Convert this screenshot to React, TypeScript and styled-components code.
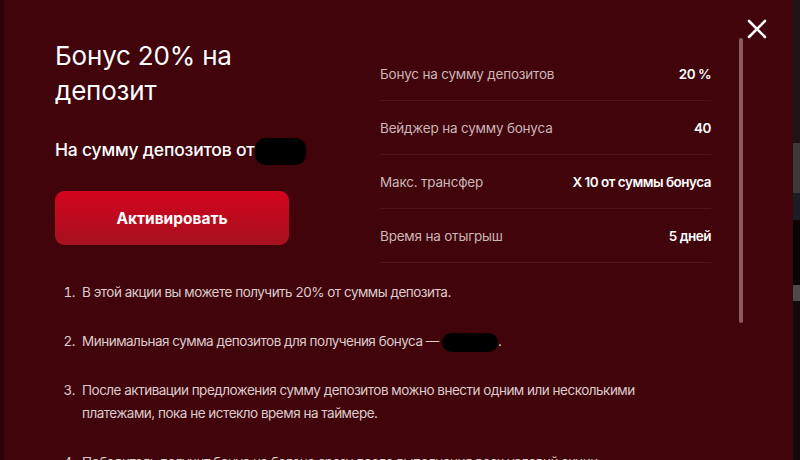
import React from "react";
import styled, { createGlobalStyle } from "styled-components";

const Global = createGlobalStyle`
  html, body { margin: 0; padding: 0; background: #140708; }
  body { font-family: Inter, "Noto Sans", "Liberation Sans", sans-serif; }
  * { box-sizing: border-box; }
`;

const Screen = styled.div`
  display: flex;
  width: 800px;
  height: 460px;
  overflow: hidden;
  background: #2c0206;
`;

const EdgeLeft = styled.div`
  width: 4px;
  flex: none;
  background: #2c0206;
`;

const Modal = styled.div`
  position: relative;
  width: 789px;
  flex: none;
  height: 460px;
  background: #41040b;
  padding: 38px 82px 0 51px;
  color: #fff;
  overflow: hidden;
`;

const EdgeRight = styled.div`
  flex: 1;
  display: flex;
  flex-direction: column;
`;

const Patch = styled.div<{ $h: number; $c: string }>`
  height: ${(p) => p.$h}px;
  background: ${(p) => p.$c};
  flex: none;
`;

const Top = styled.div`
  display: grid;
  grid-template-columns: 1fr 331px;
  column-gap: 50px;
`;

const LeftCol = styled.div`
  display: flex;
  flex-direction: column;
`;

const Title = styled.h1`
  margin: 0;
  font-size: 26px;
  line-height: 35px;
  font-weight: 400;
  letter-spacing: -0.2px;
`;

const Sub = styled.p`
  margin: 30px 0 0;
  font-size: 17.5px;
  line-height: 24px;
  font-weight: 500;
  white-space: nowrap;
  letter-spacing: -0.2px;
`;

const Hidden = styled.span<{ $w: number; $h: number }>`
  display: inline-block;
  width: ${(p) => p.$w}px;
  height: ${(p) => p.$h}px;
  background: #000;
  border-radius: 10px;
  vertical-align: middle;
`;

const ActivateButton = styled.button`
  margin-top: 26px;
  width: 234px;
  height: 54px;
  border: none;
  border-radius: 9px;
  background: linear-gradient(180deg, #d3031d 0%, #a6121f 100%);
  color: #fff;
  font-family: inherit;
  font-size: 15.5px;
  font-weight: 700;
  cursor: pointer;
`;

const Table = styled.div`
  margin-top: 9px;
  display: flex;
  flex-direction: column;
`;

const Row = styled.div`
  height: 54px;
  display: flex;
  align-items: center;
  justify-content: space-between;
  border-bottom: 1px solid rgba(255, 255, 255, 0.07);
  font-size: 13.5px;
`;

const Label = styled.span`
  color: #cbb6b8;
  letter-spacing: -0.2px;
`;

const Value = styled.span`
  color: #fff;
  font-weight: 600;
  letter-spacing: -0.5px;
`;

const List = styled.ol`
  margin: 18px 0 0;
  padding: 0 0 0 23px;
  max-width: 630px;
  font-size: 13.5px;
  line-height: 23px;
  color: #dccbcc;
  letter-spacing: -0.5px;
`;

const Item = styled.li`
  margin-bottom: 26px;
  padding-left: 4px;
`;

const Scrollbar = styled.div`
  position: absolute;
  top: 38px;
  right: 50px;
  width: 4px;
  height: 285px;
  border-radius: 2px;
  background: #8d5a5f;
`;

const Close = styled.button`
  position: absolute;
  top: 18px;
  right: 25px;
  width: 22px;
  height: 22px;
  padding: 0;
  border: none;
  background: transparent;
  cursor: pointer;
  display: flex;
  align-items: center;
  justify-content: center;
`;

const rows = [
  ["Бонус на сумму депозитов", "20 %"],
  ["Вейджер на сумму бонуса", "40"],
  ["Макс. трансфер", "X 10 от суммы бонуса"],
  ["Время на отыгрыш", "5 дней"],
];

export default function App() {
  return (
    <>
      <Global />
      <Screen>
        <EdgeLeft />
        <Modal>
          <Top>
            <LeftCol>
              <Title>
                Бонус 20% на
                <br />
                депозит
              </Title>
              <Sub>
                На сумму депозитов от
                <Hidden $w={51} $h={27} />
              </Sub>
              <ActivateButton>Активировать</ActivateButton>
            </LeftCol>
            <Table>
              {rows.map(([l, v]) => (
                <Row key={l}>
                  <Label>{l}</Label>
                  <Value>{v}</Value>
                </Row>
              ))}
            </Table>
          </Top>
          <List>
            <Item>В этой акции вы можете получить 20% от суммы депозита.</Item>
            <Item>
              Минимальная сумма депозитов для получения бонуса —{" "}
              <Hidden $w={56} $h={19} />.
            </Item>
            <Item>
              После активации предложения сумму депозитов можно внести одним или несколькими
              платежами, пока не истекло время на таймере.
            </Item>
            <Item>
              Победитель получит бонус на баланс сразу после выполнения всех условий акции.
            </Item>
          </List>
          <Scrollbar />
          <Close aria-label="Закрыть">
            <svg width="20" height="20" viewBox="0 0 20 20">
              <path d="M2 2 L18 18 M18 2 L2 18" stroke="#fff" strokeWidth="2.6" strokeLinecap="round" />
            </svg>
          </Close>
        </Modal>
        <EdgeRight>
          <Patch $h={143} $c="#1e1416" />
          <Patch $h={50} $c="#3a3a3b" />
          <Patch $h={27} $c="#1b1d26" />
          <Patch $h={65} $c="#0b0606" />
          <Patch $h={16} $c="#4c4a4a" />
          <Patch $h={159} $c="#120909" />
        </EdgeRight>
      </Screen>
    </>
  );
}
